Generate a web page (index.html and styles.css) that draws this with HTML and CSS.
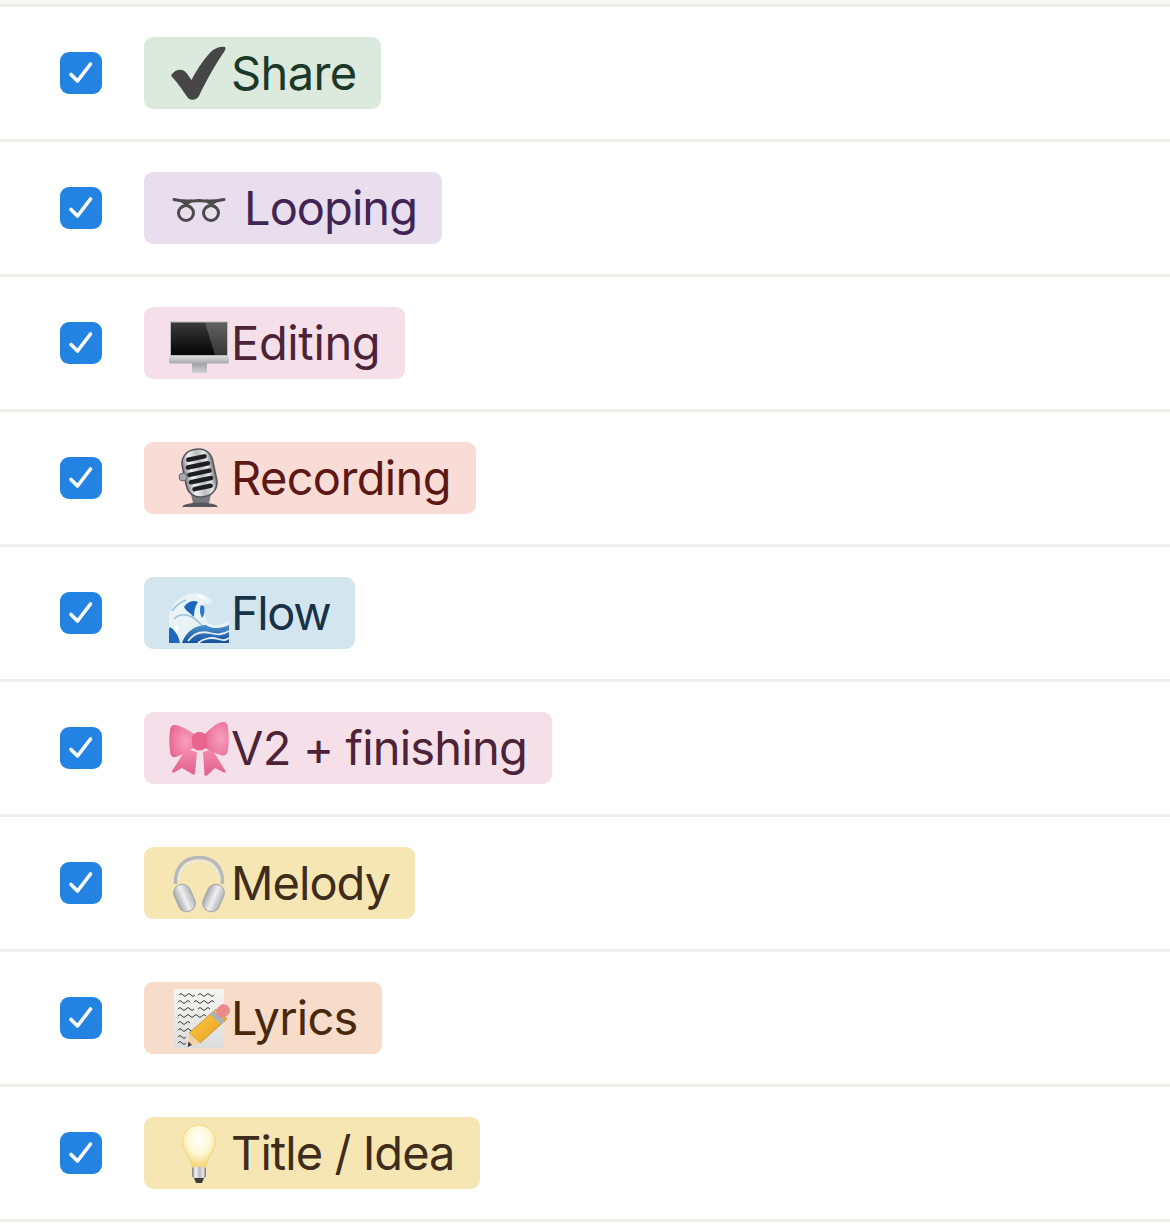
FILE: index.html
```html
<!DOCTYPE html>
<html lang="en">
<head>
<meta charset="utf-8">
<title>Song checklist</title>
<link rel="stylesheet" href="styles.css">
</head>
<body>
<svg class="defs" width="0" height="0" aria-hidden="true">
  <defs>
    <linearGradient id="metal" x1="0" y1="0" x2="1" y2="0"><stop offset="0" stop-color="#7c7e83"/><stop offset=".25" stop-color="#f2f3f3"/><stop offset=".55" stop-color="#b9bbbe"/><stop offset=".8" stop-color="#e8e8e9"/><stop offset="1" stop-color="#6d6f73"/></linearGradient>
    <linearGradient id="chin" x1="0" y1="0" x2="0" y2="1"><stop offset="0" stop-color="#dcdcde"/><stop offset="1" stop-color="#a9aaad"/></linearGradient>
    <linearGradient id="stand" x1="0" y1="0" x2="0" y2="1"><stop offset="0" stop-color="#9fa0a3"/><stop offset="1" stop-color="#d0d1d3"/></linearGradient>
    <linearGradient id="screen" x1="0" y1="0" x2="0" y2="1"><stop offset="0" stop-color="#3a3a3a"/><stop offset="1" stop-color="#050505"/></linearGradient>
    <linearGradient id="sea" x1="0" y1="0" x2="0" y2="1"><stop offset="0" stop-color="#4d92cc"/><stop offset="1" stop-color="#14509f"/></linearGradient>
    <linearGradient id="ribbon" x1="0" y1="0" x2="0" y2="1"><stop offset="0" stop-color="#f58cae"/><stop offset="1" stop-color="#e0608c"/></linearGradient>
    <radialGradient id="loop" cx=".65" cy=".5" r=".8"><stop offset="0" stop-color="#f6a0bc"/><stop offset=".6" stop-color="#ee7aa1"/><stop offset="1" stop-color="#dd5b88"/></radialGradient>
    <linearGradient id="cup" x1="0" y1="0" x2="1" y2="0"><stop offset="0" stop-color="#a5a7ab"/><stop offset=".5" stop-color="#f0f0f2"/><stop offset="1" stop-color="#b3b4b8"/></linearGradient>
    <linearGradient id="paper" x1="0" y1="0" x2="0" y2="1"><stop offset="0" stop-color="#f6f6f5"/><stop offset="1" stop-color="#dcdcdb"/></linearGradient>
    <linearGradient id="pencil" x1="0" y1="0" x2="1" y2="1"><stop offset="0" stop-color="#fbd04a"/><stop offset="1" stop-color="#e89a1c"/></linearGradient>
    <radialGradient id="glow" cx=".5" cy=".34" r=".62"><stop offset="0" stop-color="#fffffb"/><stop offset=".55" stop-color="#fff8d6"/><stop offset="1" stop-color="#f6d980"/></radialGradient>
    <symbol id="tick" viewBox="0 0 42 42"><path class="tick" d="M11 22.500 17.500 29 30.500 12"/></symbol>
  </defs>
</svg>

<ul class="list">
  <li class="row">
    <span class="box"><svg class="tick-svg" width="42" height="42"><use href="#tick"/></svg></span>
    <span class="tag tag-green">
      <svg class="emoji" viewBox="0 0 64 64" width="64" height="64"><path fill="#464646" d="M4 33C7 29 11 28 14 29 18 30 20 34 23.500 39 30 27 37 16 45 9 49 6 55 5 57 6 58 7 57.500 9 56 11 47 24 38 40 31 55 29 59 23 60 20 57 15 50 10 42 5 37 3 36 3 34 4 33Z"/></svg>
      <span>Share</span>
    </span>
  </li>
  <li class="row">
    <span class="box"><svg class="tick-svg" width="42" height="42"><use href="#tick"/></svg></span>
    <span class="tag tag-purple">
      <svg class="emoji emoji-wide" viewBox="0 0 64 64" width="64" height="64"><g fill="none" stroke="#4b4b4b" stroke-width="3" stroke-linecap="round"><path d="M6 23.500C14 25.500 22 25.500 31 24.500 40 25.500 48 25.500 56 23.500"/><circle cx="18" cy="37" r="7.500"/><circle cx="43" cy="37" r="7.500"/><path d="M14 25 22 31M23 25 14 31M39 25 47 31M48 25 39 31"/></g></svg>
      <span class="ls-tight">Looping</span>
    </span>
  </li>
  <li class="row">
    <span class="box"><svg class="tick-svg" width="42" height="42"><use href="#tick"/></svg></span>
    <span class="tag tag-pink">
      <svg class="emoji" viewBox="0 0 64 64" width="64" height="64"><rect x="2" y="10.500" width="58" height="34.500" fill="#b9b9bb"/><rect x="3" y="11.500" width="56" height="32.500" fill="url(#screen)"/><path d="M37 11.500H59V44H47Z" fill="#fff" opacity=".2"/><rect x="1" y="45" width="60" height="7.500" rx="1.500" fill="url(#chin)"/><rect x="24" y="52" width="15" height="10" fill="url(#stand)"/></svg>
      <span class="ls-loose">Editing</span>
    </span>
  </li>
  <li class="row">
    <span class="box"><svg class="tick-svg" width="42" height="42"><use href="#tick"/></svg></span>
    <span class="tag tag-red">
      <svg class="emoji" viewBox="0 0 64 64" width="64" height="64"><path d="M22 44H44L41 57H25Z" fill="#77797d"/><path d="M14 61C15 58 24 56.500 32 56.500S49 58 50 61Z" fill="#55575a"/><g transform="rotate(-12 31.500 27)"><rect x="16" y="3" width="31" height="48" rx="14" fill="url(#metal)" stroke="#54565a" stroke-width="1.500"/><g fill="#1e1e20"><rect x="21" y="9.500" width="21" height="4.500" rx="2.200"/><rect x="19" y="17" width="25" height="4.500" rx="2.200"/><rect x="19" y="24.500" width="25" height="4.500" rx="2.200"/><rect x="19" y="32" width="25" height="4.500" rx="2.200"/><rect x="21" y="39.500" width="21" height="4.500" rx="2.200"/></g></g><circle cx="15" cy="31" r="4" fill="#a7a9ad" stroke="#66686c"/></svg>
      <span>Recording</span>
    </span>
  </li>
  <li class="row">
    <span class="box"><svg class="tick-svg" width="42" height="42"><use href="#tick"/></svg></span>
    <span class="tag tag-blue">
      <svg class="emoji" viewBox="0 0 64 64" width="64" height="64"><path fill="#e9f2f4" d="M1 62V36C3 23 14 12 27 12 31 11 38 15 43 18 45 20 44 23 41 23L37 22C34 26 36 34 40 42 47 47 54 43 61 40V62Z"/><path fill="#1d67bd" d="M16 26C20 20 26 19 30 21 27 25 26 30 26 36 22 32 18 30 16 26ZM2 46C8 50 11 56 12 62H1V48Z"/><path fill="url(#sea)" d="M14 62C18 50 28 44 38 44 45 49 54 47 61 44V62Z"/><path fill="none" stroke="#e4eff4" stroke-width="1.800" d="M20 60C26 52 34 50 42 52S54 54 61 50M30 62C36 57 44 56 50 58S58 59 61 57"/><path fill="none" stroke="#9cc2de" stroke-width="1.500" d="M6 38C11 33 18 33 24 36 28 38 31 42 34 44M4 30C8 24 13 21 18 19"/><path fill="#fff" d="M6 46 9 44 11 48 8 51ZM28 14 34 14 38 18 33 18Z"/><path fill="#2a78cb" d="M33 24C31 28 32 33 34 37 36 35 37 30 36 25Z"/></svg>
      <span class="ls-tightest">Flow</span>
    </span>
  </li>
  <li class="row">
    <span class="box"><svg class="tick-svg" width="42" height="42"><use href="#tick"/></svg></span>
    <span class="tag tag-pink">
      <svg class="emoji" viewBox="0 0 64 64" width="64" height="64"><g fill="url(#ribbon)"><path d="M18 33 4 55C4 57 5 57 6 56.500L14 52 25 58.500C26.500 59 27 58 27 57L29 36Z"/><path d="M35 36 36.500 59C37 60 38 60 39 59.500L47 52 56 56.500C57 57 58 56 57.500 55L44 33Z"/></g><path fill="url(#loop)" d="M2 15C2 9 6 8 10 9.500 16 11.500 22 15 26 18V32C20 35 13 39 8 41 4 42 2 39 2 34 1 28 1 21 2 15Z"/><path fill="url(#loop)" d="M60 12C60 6 56 5 52 6.500 46 9 41 14 37 18V32C42 34 48 38 54 39.500 58 40 60 37 60 33 61 27 61 19 60 12Z"/><rect x="24" y="16" width="15" height="18.500" rx="7" fill="#e9648f"/></svg>
      <span class="ls-snug">V2 + finishing</span>
    </span>
  </li>
  <li class="row">
    <span class="box"><svg class="tick-svg" width="42" height="42"><use href="#tick"/></svg></span>
    <span class="tag tag-yellow">
      <svg class="emoji" viewBox="0 0 64 64" width="64" height="64"><path d="M7.500 33C7 15 17 6.500 31 6.500S55 15 54.500 33" fill="none" stroke="#b7b8bb" stroke-width="3.500"/><path d="M10 29C11 18 19 10 31 10S51 18 52 29" fill="none" stroke="#e9e9e9" stroke-width="1.500"/><rect x="8" y="33" width="17" height="28" rx="8" fill="url(#cup)" stroke="#a5a6aa" transform="rotate(-24 16.500 47)"/><rect x="37" y="33" width="17" height="28" rx="8" fill="url(#cup)" stroke="#a5a6aa" transform="rotate(24 45.500 47)"/></svg>
      <span class="ls-tight">Melody</span>
    </span>
  </li>
  <li class="row">
    <span class="box"><svg class="tick-svg" width="42" height="42"><use href="#tick"/></svg></span>
    <span class="tag tag-orange">
      <svg class="emoji" viewBox="0 0 64 64" width="64" height="64"><rect x="6" y="3" width="50" height="59" fill="url(#paper)"/><g fill="none" stroke="#3a3a3a" stroke-width="1"><path d="M11 9q2-3 4 0t4 0 4 0 4 0M30 9q2-3 4 0t4 0 4 0 4 0"/><path d="M10 16q2-3 4 0t4 0 4 0M26 16q2-3 4 0t4 0 4 0 4 0 4 0"/><path d="M10 23q2-3 4 0t4 0 4 0 4 0M30 23q2-3 4 0t4 0 4 0"/><path d="M10 30q2-3 4 0t4 0 4 0 4 0 4 0 4 0 4 0"/><path d="M10 37q2-3 4 0t4 0 4 0"/><path d="M10 44q2-3 4 0t4 0 4 0 4 0"/><path d="M10 51q2-3 4 0t4 0"/><path d="M10 57q2-3 4 0t4 0"/></g><path fill="url(#pencil)" stroke="#bb7a12" stroke-width=".6" d="M48 23 59 33 32 57 21 47Z"/><path fill="#f1d2a6" d="M21 47 32 57 20 61Z"/><path fill="#3b3b3b" d="M20.500 55.500 24 59 19.500 61Z"/><path fill="#aab0b6" d="M46 25 57 35 53 38.500 42 28.500Z"/><rect x="49" y="18" width="12" height="14" rx="5.500" fill="#ec8a8b" transform="rotate(48 55 25)"/></svg>
      <span class="ls-snug">Lyrics</span>
    </span>
  </li>
  <li class="row">
    <span class="box"><svg class="tick-svg" width="42" height="42"><use href="#tick"/></svg></span>
    <span class="tag tag-yellow">
      <svg class="emoji" viewBox="0 0 64 64" width="64" height="64"><path fill="url(#glow)" stroke="#f4d67c" stroke-width="1" d="M31 4C40 4 47.500 11.500 47.500 20.500 47.500 30 40 34 38 46H24C22 34 14.500 30 14.500 20.500 14.500 11.500 22 4 31 4Z"/><rect x="24" y="46" width="14" height="11" rx="2" fill="url(#metal)"/><path fill="#3c3c3c" d="M26 57H36L34 62H28Z"/></svg>
      <span class="ls-tight">Title / Idea</span>
    </span>
  </li>
</ul>
</body>
</html>
```
FILE: styles.css
```css
* { box-sizing: border-box; }

html, body {
  margin: 0;
  padding: 0;
  background: #fff;
}

body {
  font-family: Inter, "Noto Sans", "Liberation Sans", sans-serif;
  border-top: 4px solid #f8f8f6;
  height: 1225px;
  overflow: hidden;
}

.defs { display: block; height: 0; }

.list {
  list-style: none;
  margin: 0;
  padding: 0;
  border-top: 3px solid #eeeeed;
}

.row {
  height: 135px;
  display: flex;
  align-items: center;
  gap: 42px;
  padding-left: 60px;
  border-bottom: 3px solid #eeeeed;
}

.box {
  flex: none;
  width: 42px;
  height: 42px;
  border-radius: 9px;
  background: #2383e2;
  display: flex;
}

.tick-svg { display: block; }

.tick {
  fill: none;
  stroke: #fff;
  stroke-width: 3.600;
  stroke-linecap: round;
  stroke-linejoin: round;
}

.tag {
  display: flex;
  align-items: center;
  height: 72px;
  padding: 0 25px 0 24px;
  border-radius: 9px;
  font-size: 47px;
  letter-spacing: -0.65px;
  line-height: 72px;
  white-space: nowrap;
}

.emoji { flex: none; display: block; margin-right: -1px; }
.emoji-wide { margin-right: 12px; }

.ls-loose { letter-spacing: -0.35px; }
.ls-snug { letter-spacing: -0.8px; }
.ls-tight { letter-spacing: -0.95px; }
.ls-tightest { letter-spacing: -1.4px; }

.tag-green  { background: #dbeadd; color: #1c3829; }
.tag-purple { background: #e8deee; color: #412454; }
.tag-pink   { background: #f5e0e9; color: #4c2337; }
.tag-red    { background: #fadcd7; color: #5d1715; }
.tag-blue   { background: #d3e5ef; color: #183347; }
.tag-yellow { background: #f6e6b4; color: #402c1b; }
.tag-orange { background: #f7dcc9; color: #49290e; }
```
